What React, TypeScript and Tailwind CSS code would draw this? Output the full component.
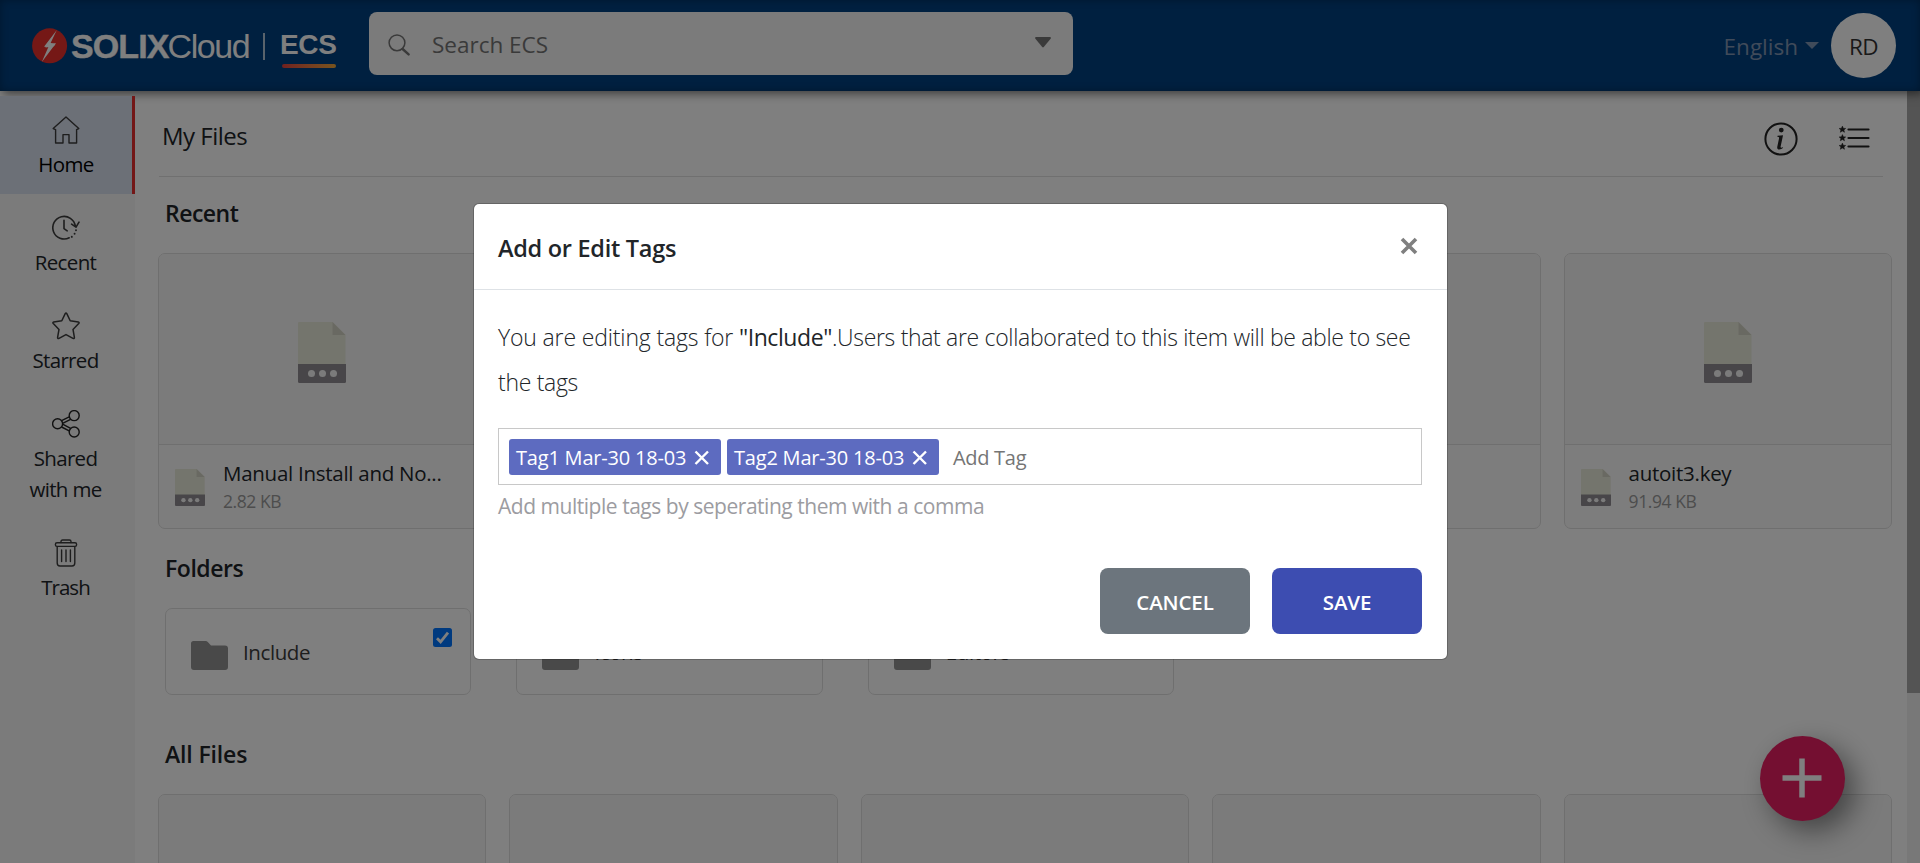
import type { ReactNode } from "react";

function Logo() {
  return (
    <div className="flex w-[336px] pl-8 pt-[28px] text-white font-['Liberation_Sans',Arial,sans-serif]">
      <svg width="36" height="36" viewBox="0 0 36 36" className="shrink-0">
        <circle cx="17.6" cy="17.8" r="17.5" fill="#ea302c" />
        <path d="M24.8 2 L12.2 18.4 L16.6 18.6 L9.8 34 L23.8 15.4 L18.6 15 Z" fill="#fff" />
        <path d="M12.2 18.6 L23.8 15.2 L22 18.2 L14 19.4 Z" fill="#fff" />
      </svg>
      <div className="ml-[3px] flex h-[36px] w-[179px] items-center whitespace-nowrap text-[34px] leading-[36px]">
        <span className="font-bold tracking-[-0.9px] [-webkit-text-stroke:0.4px_white]">SOLIX</span>
        <span className="-ml-px tracking-[-1.4px]">Cloud</span>
      </div>
      <div className="ml-[14px] mt-[5px] h-[27px] w-[1.5px] shrink-0 bg-white/70" />
      <div className="ml-[15px] w-[57px] shrink-0">
        <div className="h-9 text-[28px] font-bold leading-[34px] tracking-[-0.3px]">ECS</div>
        <div className="ml-0.5 h-1 w-[54px] rounded-full bg-linear-to-r from-[#e2403f] to-[#f0a83c]" />
      </div>
    </div>
  );
}

function HomeIcon() {
  return (
    <svg width="28" height="28" viewBox="0 0 28 28" fill="none" stroke="#3c3c3c" strokeWidth="1.4" strokeLinejoin="round">
      <path d="M1.2 12.6 L14 1 L26.8 12.6 L24.6 13.6 V27 H17 V18.6 H11 V27 H3.6 V13.6 Z" />
    </svg>
  );
}

function RecentIcon() {
  return (
    <svg width="28" height="28" viewBox="0 0 28 28" fill="none" stroke="#3c3c3c" strokeWidth="1.6" strokeLinecap="round" strokeLinejoin="round">
      <path d="M17.2 23.8 A11.3 11.3 0 1 1 23.3 12.1" />
      <path d="M19.6 10.2 L24 13.2 L27 8.2" />
      <path d="M12 6.2 V14.6 L15.2 16.8" />
      <path d="M19.8 22.8 v.1 M22.6 19.6 v.1 M24 16.2 v.1" strokeWidth="1.9" />
    </svg>
  );
}

function StarIcon() {
  return (
    <svg width="28" height="28" viewBox="0 0 28 28" fill="none" stroke="#3c3c3c" strokeWidth="1.5" strokeLinejoin="round">
      <path d="M13.2 1.6 Q14 .4 14.8 1.6 L18.2 8.8 L26.3 10 Q27.7 10.4 26.7 11.5 L21 17.4 L22.4 25.4 Q22.5 27 21 26.4 L14 22.6 L7 26.4 Q5.5 27 5.6 25.4 L7 17.4 L1.3 11.5 Q.3 10.4 1.7 10 L9.8 8.8 Z" />
    </svg>
  );
}

function ShareIcon() {
  return (
    <svg width="28" height="28" viewBox="0 0 28 28" fill="none" stroke="#222" strokeWidth="1.4">
      <circle cx="5.6" cy="13.8" r="5" />
      <circle cx="22.2" cy="5.6" r="5" />
      <circle cx="22.2" cy="22" r="5" />
      <path d="M9.6 10.6 L17.2 6.8 M10.6 13.4 L18.6 9.4 M10.6 14.2 L18.6 18.4 M9.6 17 L17.2 20.8" />
    </svg>
  );
}

function TrashIcon() {
  return (
    <svg width="28" height="28" viewBox="0 0 28 28" fill="none" stroke="#3c3c3c" strokeWidth="1.4" strokeLinecap="round" strokeLinejoin="round">
      <path d="M9 3.6 V2.6 Q9 1 10.6 1 H17.4 Q19 1 19 2.6 V3.6" />
      <rect x="3.4" y="3.8" width="21.2" height="3.6" rx="1.6" />
      <path d="M5.2 7.6 V24 Q5.2 27 8 27 H20 Q22.8 27 22.8 24 V7.6" />
      <path d="M9.6 11 V22.6 M14 11 V22.6 M18.4 11 V22.6" />
    </svg>
  );
}

function NavItem({ icon, label, active = false }: { icon: ReactNode; label: ReactNode; active?: boolean }) {
  return (
    <div
      className={
        active
          ? "flex h-[98px] flex-col items-center border-r-[3px] border-[#e62e2e] bg-[#d8e0ef] pt-5 text-black"
          : "flex flex-col items-center pr-[4px] pb-[14px] pt-5 text-[#212529]"
      }
    >
      {icon}
      <div className="mt-[5px] text-center text-[20.5px] leading-[31px] tracking-[-0.65px]">{label}</div>
    </div>
  );
}

function FileIcon({ className }: { className: string }) {
  return (
    <svg className={className} viewBox="0 0 48 61" preserveAspectRatio="none">
      <path d="M0 1 Q0 0 1 0 H34.5 L47.5 13 V43 H0 Z" fill="#e8eadb" />
      <path d="M34.5 0 L47.5 13 H34.5 Z" fill="#d3d3c5" />
      <path d="M0 42 H48 V59.5 Q48 61 46.5 61 H1.5 Q0 61 0 59.5 Z" fill="#918d92" />
      <circle cx="13.5" cy="51.5" r="3.5" fill="#f7f7f7" />
      <circle cx="24.5" cy="51.5" r="3.5" fill="#f7f7f7" />
      <circle cx="35.5" cy="51.5" r="3.5" fill="#f7f7f7" />
    </svg>
  );
}

function FileCard({ name, size }: { name?: string; size?: string }) {
  return (
    <div className="h-[276px] overflow-hidden rounded-[7px] border border-[#dfdfdf] bg-[#fbfbfb]">
      <div className="flex h-[191px] justify-center border-b border-[#dfdfdf] bg-[#f6f6f6] pt-[68px]">
        {name && <FileIcon className="h-[61px] w-12" />}
      </div>
      {name && (
        <div className="flex">
          <FileIcon className="ml-4 mt-6 h-[37px] w-[30px]" />
          <div className="ml-[18px] mt-[14px] whitespace-nowrap">
            <div className="text-[20.5px] leading-7 tracking-[-0.27px] text-[#212529]">{name}</div>
            <div className="mt-0.5 text-[17.5px] leading-6 tracking-[-0.42px] text-[#9a9a9a]">{size}</div>
          </div>
        </div>
      )}
    </div>
  );
}

function FolderCard({ name, checked = false }: { name: string; checked?: boolean }) {
  return (
    <div className="relative flex h-[87px] rounded-[7px] border border-[#dfdfdf] pl-[25px]">
      <svg width="37" height="29" viewBox="0 0 37 29" className="mt-[32px] shrink-0">
        <path d="M2.5 0 H14.5 Q16 0 17 1.2 L20 4.6 H34 Q37 4.6 37 7.6 V26 Q37 29 34 29 H3 Q0 29 0 26 V2.5 Q0 0 2.5 0 Z" fill="#929292" />
      </svg>
      <div className="ml-[15px] mt-[29px] text-[20.5px] leading-7 tracking-[-0.4px] text-[#3c3c3c]">{name}</div>
      {checked && (
        <svg width="19" height="19" viewBox="0 0 19 19" className="absolute right-[18px] top-[19px]">
          <rect width="19" height="19" rx="2.5" fill="#0075ff" />
          <path d="M4 10.2 L7.6 13.8 L15 4.6" fill="none" stroke="#fff" strokeWidth="2.8" />
        </svg>
      )}
    </div>
  );
}

const star = "M0 -3.4 L.95 -1.2 L3.3 -1.05 L1.5 .5 L2.1 2.8 L0 1.55 L-2.1 2.8 L-1.5 .5 L-3.3 -1.05 L-.95 -1.2 Z";

function Tag({ children }: { children: ReactNode }) {
  return (
    <div className="flex h-9 w-[212px] items-center rounded-[3px] bg-[#5d6bc0] pl-[7px] text-white">
      <span className="w-[171px] whitespace-nowrap pt-0.5 text-[20px] font-medium leading-9 tracking-[-0.2px]">{children}</span>
      <svg width="16" height="16" viewBox="0 0 16 16" className="ml-[7px] mt-0.5" stroke="#fff" strokeWidth="2.4">
        <path d="M1.500 1.500 L14 14 M14 1.500 L1.500 14" />
      </svg>
    </div>
  );
}

const heading = "ml-[30px] text-[23px] font-semibold leading-[30px] text-[#212529]";

export default function App() {
  return (
    <div className="relative flex h-[863px] w-[1920px] flex-col overflow-hidden bg-white font-['Open_Sans',sans-serif]">
      <header className="relative z-10 flex h-[91px] shrink-0 bg-[#004080] shadow-[3px_3px_9px_rgba(0,0,0,0.5),inset_0_0_9px_rgba(0,0,0,0.3)]">
        <Logo />
        <div className="ml-[33px] mt-3 flex h-[63px] w-[704px] items-center rounded-lg bg-[#f6f6f6]">
          <svg width="22" height="22" viewBox="0 0 22 22" className="ml-[19px] mt-0.5" fill="none" stroke="#757575">
            <circle cx="9" cy="8.8" r="7.9" strokeWidth="1.5" />
            <path d="M14.6 15 L20.6 20.4" strokeWidth="2.4" strokeLinecap="round" />
          </svg>
          <span className="ml-[22px] flex-1 pt-0.5 text-[22.5px] leading-[30px] text-[#757575]">Search ECS</span>
          <svg width="16" height="11" viewBox="0 0 16 11" className="mr-[22px] -mt-0.5">
            <path d="M1 0 H15 Q16.4 .4 15.6 1.8 L8.8 10 Q8 10.8 7.2 10 L.4 1.8 Q-.4 .4 1 0 Z" fill="#757575" />
          </svg>
        </div>
        <div className="ml-auto mr-6 mt-[13px] flex h-[65px] items-center">
          <span className="pt-0.5 text-[22.5px] leading-[30px] tracking-[0px] text-[#8096b4]">English</span>
          <svg width="14" height="7" viewBox="0 0 14 7" className="ml-[7px]">
            <path d="M0 0 H14 L7 7 Z" fill="#8096b4" />
          </svg>
          <div className="ml-3 flex h-[65px] w-[65px] items-center justify-center rounded-full bg-white pt-0.5 text-[22.5px] tracking-[-0.5px] text-[#333]">RD</div>
        </div>
      </header>

      <div className="flex min-h-0 flex-1">
        <nav className="relative z-20 mt-[5px] w-[135px] shrink-0 bg-[#f6f6f6]">
          <NavItem active icon={<HomeIcon />} label="Home" />
          <NavItem icon={<RecentIcon />} label="Recent" />
          <NavItem icon={<StarIcon />} label="Starred" />
          <NavItem icon={<ShareIcon />} label={<>Shared<br />with me</>} />
          <NavItem icon={<TrashIcon />} label={<span className="tracking-[-1px]">Trash</span>} />
        </nav>

        <main className="min-w-0 flex-1 overflow-hidden">
          <div className="mx-6 flex h-[86px] justify-between border-b border-[#e0e0e0]">
            <h1 className="ml-[3px] mt-[30px] text-[24px] leading-[30px] tracking-[-0.5px] text-[#212529]">My Files</h1>
            <div className="mr-3 mt-[31px] flex gap-[41px]">
              <svg width="34" height="34" viewBox="0 0 34 34">
                <circle cx="17" cy="17" r="15.6" fill="none" stroke="#222" strokeWidth="2" />
                <g transform="translate(16.800 17) scale(2.400) translate(-8 -8.200)" fill="#222">
                  <path d="m8.93 6.588-2.29.287-.082.38.45.083c.294.07.352.176.288.469l-.738 3.468c-.194.897.105 1.319.808 1.319.545 0 1.178-.252 1.465-.598l.088-.416c-.2.176-.492.246-.686.246-.275 0-.375-.193-.304-.533zM9.200 4.500a1 1 0 1 1-2 0 1 1 0 0 1 2 0" />
                </g>
              </svg>
              <svg width="32" height="34" viewBox="0 0 32 34" fill="#222" stroke="#222">
                <path d="M9.5 7.5 H29.5 M9.5 16 H29.5 M9.5 24.5 H29.5" strokeWidth="2.2" strokeLinecap="round" />
                <g stroke="#222" strokeWidth=".5">
                  <path d={star} transform="translate(3.4 7.5)" />
                  <path d={star} transform="translate(3.4 16)" />
                  <path d={star} transform="translate(3.4 24.5)" />
                </g>
              </svg>
            </div>
          </div>

          <h2 className={`${heading} mt-[21px] tracking-[-0.5px]`}>Recent</h2>
          <div className="ml-[23px] mt-[25px] grid w-[1734px] grid-cols-5 gap-[23px]">
            <FileCard name="Manual Install and No..." size="2.82 KB" />
            <FileCard />
            <FileCard />
            <FileCard />
            <FileCard name="autoit3.key" size="91.94 KB" />
          </div>

          <h2 className={`${heading} mt-[24px] tracking-[-0.45px]`}>Folders</h2>
          <div className="ml-[30px] mt-[25px] grid w-[1712px] grid-cols-5 gap-[45px]">
            <FolderCard name="Include" checked />
            <FolderCard name="Icons" />
            <FolderCard name="Editors" />
          </div>

          <h2 className={`${heading} mt-[44px] tracking-[-0.15px]`}>All Files</h2>
          <div className="ml-[23px] mt-[25px] grid w-[1734px] grid-cols-5 gap-[23px]">
            <FileCard />
            <FileCard />
            <FileCard />
            <FileCard />
            <FileCard />
          </div>
        </main>

        <div className="w-[13px] shrink-0 bg-[#f1f1f1]">
          <div className="h-[602px] bg-[#a8a8a8]" />
        </div>
      </div>

      <div className="absolute bottom-[42px] right-[75px] z-20 flex h-[85px] w-[85px] items-center justify-center rounded-full bg-[#e91e63] shadow-[10px_10px_28px_rgba(0,0,0,0.45)]">
        <svg width="40" height="40" viewBox="0 0 40 40" className="-ml-px -mt-px" stroke="#fff" strokeWidth="5.5">
          <path d="M20 .5 V39.5 M.5 20 H39.5" />
        </svg>
      </div>

      <div className="absolute inset-0 z-30 bg-black/50 pt-[203px]">
        <div className="ml-[473px] h-[457px] w-[975px] rounded-md border border-black/20 bg-white bg-clip-padding">
          <div className="flex h-[86px] justify-between border-b border-[#dee2e6] pl-6 pr-[29px]">
            <h3 className="mt-[29px] text-[23.5px] font-semibold leading-[30px] tracking-[-0.28px] text-[#212529]">Add or Edit Tags</h3>
            <svg width="18" height="18" viewBox="0 0 18 18" className="mt-[33px]" stroke="#7f7f7f" strokeWidth="3.6">
              <path d="M2 2 L16 16 M16 2 L2 16" />
            </svg>
          </div>
          <div className="px-6 pt-[25px]">
            <p className="whitespace-nowrap text-[23px] font-light leading-[45px] text-[#212529]">
              <span className="tracking-[-0.15px]">You are editing tags for </span>
              <span className="font-medium tracking-[-0.42px]">"Include"</span>
              <span className="tracking-[-0.33px]">.Users that are collaborated to this item will be able to see</span>
              <br />
              <span className="tracking-[-0.3px]">the tags</span>
            </p>
            <div className="mt-[23px] flex h-[57px] w-[924px] gap-1.5 border border-[#c8c8c8] pl-2.5 pt-2.5">
              <Tag>Tag1 Mar-30 18-03</Tag>
              <Tag>Tag2 Mar-30 18-03</Tag>
              <span className="ml-2 pt-px text-[20px] leading-9 tracking-[-0.3px] text-[#757575]">Add Tag</span>
            </div>
            <div className="mt-1.5 text-[21px] leading-[30px] tracking-[-0.47px] text-[#9c9ca1]">
              Add multiple tags by seperating them with a comma
            </div>
            <div className="mt-[47px] flex w-[924px] justify-end gap-[22px] text-[20.5px] font-semibold tracking-[-0.15px] text-white">
              <button className="h-[66px] w-[150px] rounded-lg bg-[#6c757d] pt-0.5">CANCEL</button>
              <button className="h-[66px] w-[150px] rounded-lg bg-[#3d4db1] pt-0.5">SAVE</button>
            </div>
          </div>
        </div>
      </div>
    </div>
  );
}
